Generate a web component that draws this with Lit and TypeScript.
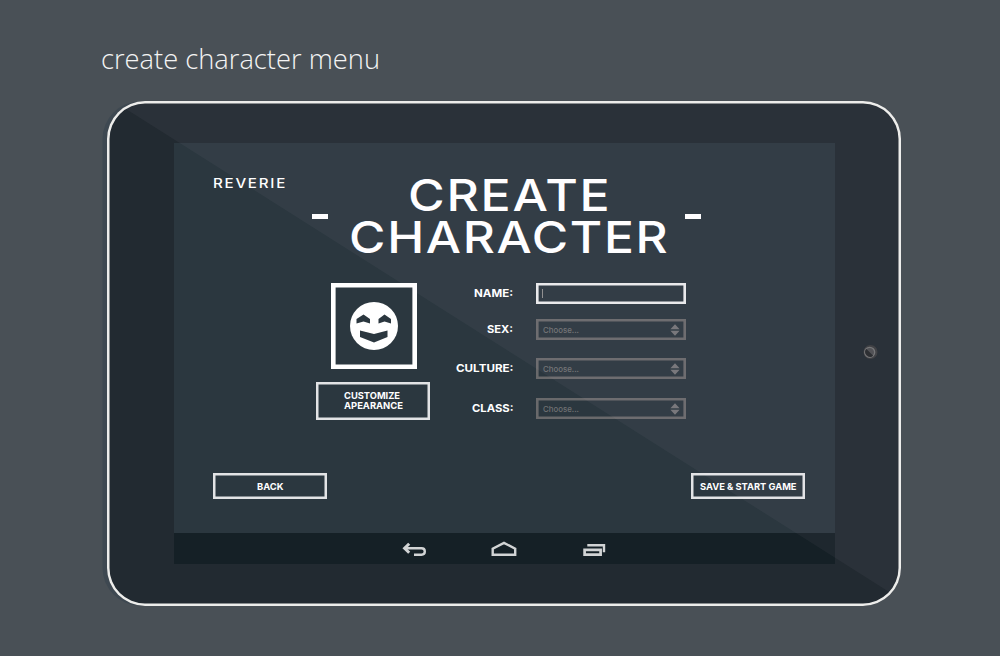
import { LitElement, html, svg, css } from "lit";
import { customElement, property } from "lit/decorators.js";

/* One line of real text, set to an exact measured width. */
@customElement("fit-text")
class FitText extends LitElement {
  @property() text = "";
  @property({ type: Number }) w = 100;
  @property({ type: Number }) size = 12;
  @property({ type: Number }) weight = 600;
  @property({ type: Number }) track = 0;
  @property() family = "Inter";
  static styles = css`
    :host { display: block; flex: none; }
    svg { display: block; overflow: visible; }
  `;
  render() {
    const cap = this.size * 0.727;
    return html`<svg width=${this.w} height=${cap}>
      <text x="0" y=${cap} fill="currentColor" font-family="${this.family}, Lato, sans-serif"
        font-size=${this.size} font-weight=${this.weight} letter-spacing=${this.track}
        textLength=${this.w + this.track} lengthAdjust="spacingAndGlyphs">${this.text}</text>
    </svg>`;
  }
}

@customElement("select-field")
class SelectField extends LitElement {
  static styles = css`
    :host { box-sizing: border-box; display: flex; align-items: center; justify-content: space-between;
      width: 150px; height: 21px; box-shadow: inset 0 0 0 2.6px #69696b; padding: 0 6px 0 7px; color: #707173; }
    svg { display: block; }
    fit-text { padding-top: 1px; }
  `;
  render() {
    return html`<fit-text text="Choose..." w="36" size="8.2" weight="450"></fit-text>
      <svg width="10" height="12" viewBox="0 0 10 12" fill="#747477">
        <path d="M5 0.3 9.6 5.200H.4ZM.4 6.800H9.6L5 11.7Z"/></svg>`;
  }
}

@customElement("app-root")
export class AppRoot extends LitElement {
  static styles = css`
    :host { display: block; box-sizing: border-box; width: 1000px; height: 656px; overflow: hidden;
      background: #495056; color: #fff; font-family: "Open Sans", sans-serif; padding: 46px 0 0 101px; }
    .title { height: 26px; color: #f4f4f4; }
    .title fit-text { padding-top: 2.6px; }
    .device { position: relative; box-sizing: border-box; width: 794px; height: 504.5px; margin: 29.4px 0 0 6.3px;
      border-radius: 38px; background: #222a31;
      box-shadow: -5px 0 0 -0.5px #3e4851; padding: 42px 0 0 67.2px; display: flex; }
    .glare { position: absolute; left: 0; top: 0; width: 794px; height: 504.5px; pointer-events: none; }
    .frame { position: absolute; inset: 0; border-radius: 38px; box-shadow: inset 0 0 0 2.5px #ededeb; pointer-events: none; }
    .screen { width: 661px; height: 420.5px; background: #2b373f; display: flex; flex-direction: column; }
    .content { box-sizing: border-box; flex: 1; display: flex; flex-direction: column; padding: 35px 30px 34px 38.5px; }
    .header { display: flex; height: 104.5px; }
    .brand { width: 99px; padding-top: 1px; }
    .heading { display: flex; align-items: flex-start; }
    .lines { display: flex; flex-direction: column; gap: 9.6px; width: 316px; padding-top: 1px; margin: 0 20px 0 21px; }
    .lines fit-text:first-child { margin-left: 59.5px; }
    .dash { width: 16px; height: 5px; background: #fff; margin-top: 36px; }
    .form { display: flex; }
    .look { width: 114px; margin-left: 103px; display: flex; flex-direction: column; align-items: center; gap: 13px; }
    .avatar { box-sizing: border-box; width: 86px; height: 86px; margin-left: 2px; box-shadow: inset 0 0 0 4.6px #fff; display: grid; place-items: center; }
    .btn { box-sizing: border-box; width: 114.5px; height: 26px; box-shadow: inset 0 0 0 2.5px #e2e3e5; display: flex;
      flex-direction: column; align-items: center; justify-content: center; gap: 4px; }
    .btn.tall { width: 114px; height: 38px; align-items: flex-start; padding: 0 0 1px 28px; }
    .fields { display: grid; grid-template-columns: 83.500px 150px; column-gap: 23px; grid-template-rows: 36.500px 39px 40px 22px; }
    .label { display: flex; justify-content: flex-end; padding-top: 6px; }
    .name { box-sizing: border-box; width: 150px; height: 21px; box-shadow: inset 0 0 0 2.6px #e9eaeb; padding: 6px 0 0 6px; }
    .caret { width: 1px; height: 9px; background: #8d8d8d; }
    .actions { display: flex; justify-content: space-between; margin-top: auto; width: 592.5px; }
    .nav { height: 31px; background: #152026; }
    .nav svg { display: block; }
    .camera { margin: 198.6px 0 0 24.5px; width: 20px; height: 20px; }
  `;

  private label(text: string, w: number) {
    return html`<div class="label"><fit-text text=${text} w=${w} size="11" weight="700"></fit-text></div>`;
  }

  private navIcons() {
    return svg`<g fill="none" stroke="#d2d4d5" stroke-width="2.400">
      <path stroke-width="3" d="M235.200 10.800 230.600 15.300 235.200 19.800"/>
      <path d="M231 15.300H247.500Q250.800 15.300 250.800 18.500T247.500 21.700H240"/>
      <path d="M318.700 21.700V15.700L330 9.900 341.200 15.700V21.700Z"/>
      <path stroke-width="2.700" d="M410.600 16.800H426.600V21.700H410.600Z"/>
      <path d="M413.300 12.200H430V19.300"/></g>`;
  }

  render() {
    return html`
      <div class="title"><fit-text text="create character menu" w="279" size="28" weight="300" family="Open Sans"></fit-text></div>
      <div class="device">
        <div class="screen">
          <div class="content">
            <div class="header">
              <div class="brand"><fit-text text="REVERIE" w="72.500" size="13" weight="550" track="1.500"></fit-text></div>
              <div class="heading">
                <div class="dash"></div>
                <div class="lines">
                  <fit-text text="CREATE" w="202" size="44" weight="520" track="1.500"></fit-text>
                  <fit-text text="CHARACTER" w="319" size="44" weight="520" track="1.500"></fit-text>
                </div>
                <div class="dash"></div>
              </div>
            </div>
            <div class="form">
              <div class="look">
                <div class="avatar">
                  <svg width="48" height="48" viewBox="0 0 48 48">
                    <circle cx="24" cy="24" r="24" fill="#fff"/>
                    <path fill="#2b373f" d="M6.500 17 13.500 12.500 20 17V21.500L13.500 19.500 6.500 21.500ZM28.500 17 34.500 12.500 41 17V21.500L34.500 19.500 28.500 21.500ZM10 28.500 24 32 37.500 28.500V35L24 40.500 10 35Z"/>
                  </svg>
                </div>
                <div class="btn tall">
                  <fit-text text="CUSTOMIZE" w="56" size="9.300" weight="700"></fit-text>
                  <fit-text text="APEARANCE" w="59" size="9.300" weight="700"></fit-text>
                </div>
              </div>
              <div class="fields">
                ${this.label("NAME:", 39)}<div class="name"><div class="caret"></div></div>
                ${this.label("SEX:", 26)}<select-field></select-field>
                ${this.label("CULTURE:", 57.5)}<select-field></select-field>
                ${this.label("CLASS:", 41.5)}<select-field></select-field>
              </div>
            </div>
            <div class="actions">
              <div class="btn"><fit-text text="BACK" w="26.500" size="9.300" weight="700"></fit-text></div>
              <div class="btn"><fit-text text="SAVE &amp; START GAME" w="96.500" size="9.300" weight="700"></fit-text></div>
            </div>
          </div>
          <div class="nav"><svg width="661" height="31">${this.navIcons()}</svg></div>
        </div>
        <svg class="camera" viewBox="0 0 20 20">
          <circle cx="10.500" cy="10" r="7" fill="#3a3c3f"/>
          <circle cx="9.700" cy="10.300" r="5" fill="#4b4d50" stroke="#717273" stroke-width="1.300"/>
          <path d="M6.200 6.800A5 5 0 0 0 13.200 13.800Z" fill="#25282b"/>
        </svg>
        <svg class="glare" viewBox="0 0 794 504.500">
          <clipPath id="body"><rect width="794" height="504.500" rx="38"/></clipPath>
          <path clip-path="url(#body)" d="M0 -4 794 498.500V0H0Z" fill="#ffeeff" fill-opacity=".038"/></svg>
        <div class="frame"></div>
      </div>`;
  }
}
